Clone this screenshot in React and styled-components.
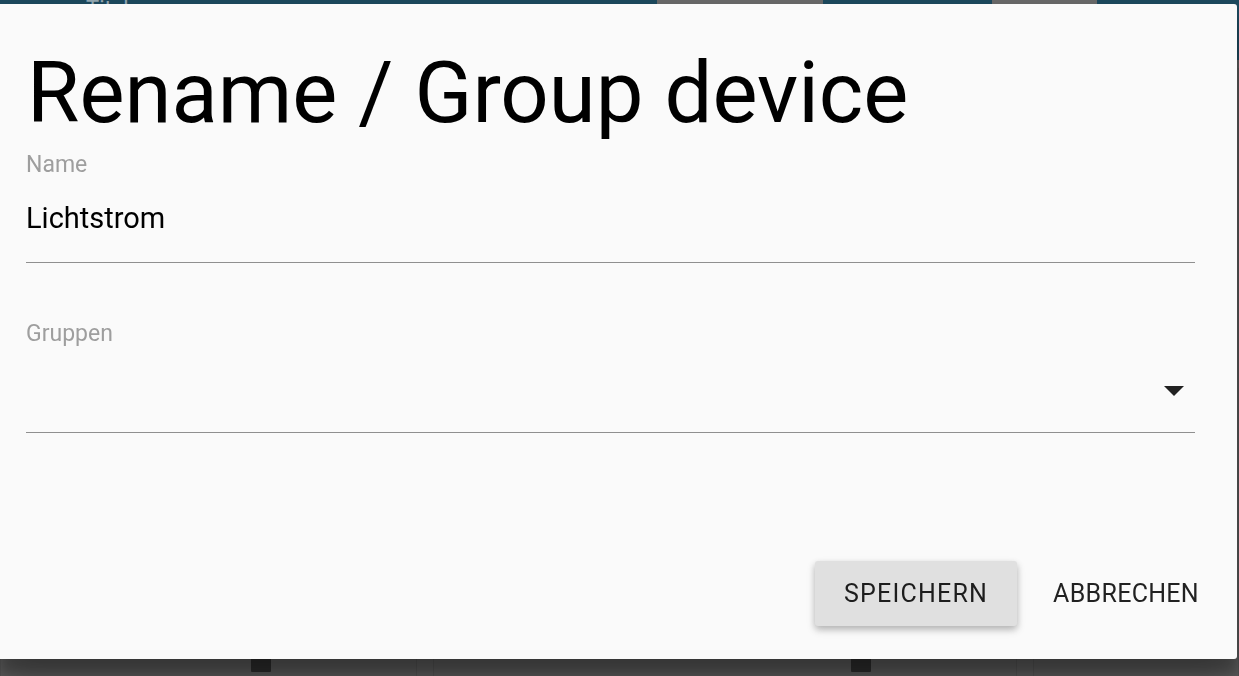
import styled, { createGlobalStyle } from "styled-components";

const Global = createGlobalStyle`
  html, body {
    margin: 0;
    padding: 0;
    height: 100%;
    overflow: hidden;
    font-family: Roboto, "Liberation Sans", sans-serif;
  }
`;

const Page = styled.div`
  width: 1239px;
  height: 676px;
  background: #5e5e5e;
  display: flex;
  flex-direction: column;
`;

const AppBar = styled.div`
  height: 60px;
  background: #1d4a5f;
  display: flex;
  align-items: flex-start;
  padding-left: 86px;
  position: relative;
`;

const BarTitle = styled.span`
  color: rgba(255, 255, 255, 0.55);
  font-size: 22px;
  line-height: 22px;
  margin-top: -2px;
`;

const Tab = styled.div`
  position: absolute;
  top: 0;
  left: ${(p) => p.left}px;
  width: ${(p) => p.width}px;
  height: 60px;
  background: #6b6b6b;
`;

const Cards = styled.div`
  flex: 1;
  display: grid;
  grid-template-columns: 417px 584px 1fr;
  column-gap: 16px;
  padding-top: 8px;
`;

const Card = styled.div`
  background: #5d5d5d;
  border-left: 1px solid #555;
  border-right: 1px solid #555;
  position: relative;
`;

const CardIcon = styled.div`
  position: absolute;
  left: ${(p) => p.left}px;
  bottom: 4px;
  width: 20px;
  height: 17px;
  background: #2e2e2e;
  border-radius: 1px;
`;

const Dialog = styled.div`
  position: fixed;
  top: 4px;
  left: 0;
  width: 1237px;
  height: 655px;
  box-sizing: border-box;
  background: #fafafa;
  border-radius: 0 3px 3px 0;
  box-shadow: 0 19px 38px rgba(0, 0, 0, 0.3), 0 15px 12px rgba(0, 0, 0, 0.22);
  padding: 47px 42px 0 26px;
  display: flex;
  flex-direction: column;
`;

const Title = styled.h1`
  margin: 0;
  font-weight: 400;
  font-size: 85px;
  line-height: 85px;
  color: #000;
  padding-left: 1px;
`;

const Field = styled.div`
  display: flex;
  flex-direction: column;
  margin-top: ${(p) => p.gap}px;
`;

const Label = styled.label`
  font-size: 23px;
  line-height: 23px;
  color: #9e9e9e;
`;

const InputRow = styled.div`
  height: ${(p) => p.height}px;
  border-bottom: 1px solid #8f8f8f;
  display: flex;
  align-items: flex-start;
  box-sizing: border-box;
`;

const Value = styled.span`
  font-size: 29px;
  line-height: 29px;
  color: #000;
  margin-top: 28px;
`;

const Arrow = styled.svg`
  width: 48px;
  height: 48px;
  margin-left: auto;
  margin-right: -3px;
  margin-top: 21px;
`;

const Actions = styled.div`
  margin-top: auto;
  margin-bottom: 33px;
  margin-right: -33px;
  display: flex;
  justify-content: flex-end;
  align-items: center;
  gap: 7px;
`;

const Button = styled.button`
  height: 65px;
  padding: 0 29px;
  border: none;
  border-radius: 3px;
  font-family: Roboto, "Liberation Sans", sans-serif;
  font-size: 25px;
  font-weight: 400;
  letter-spacing: ${(p) => p.spacing}px;
  color: rgba(0, 0, 0, 0.87);
  background: ${(p) => (p.raised ? "#e0e0e0" : "transparent")};
  box-shadow: ${(p) =>
    p.raised
      ? "0 3px 6px rgba(0,0,0,0.18), 0 4px 10px rgba(0,0,0,0.14)"
      : "none"};
`;

export default function App() {
  return (
    <>
      <Global />
      <Page>
        <AppBar>
          <BarTitle>Titel</BarTitle>
          <Tab left={657} width={166} />
          <Tab left={992} width={105} />
        </AppBar>
        <Cards>
          <Card>
            <CardIcon left={250} />
          </Card>
          <Card>
            <CardIcon left={417} />
          </Card>
          <Card />
        </Cards>
      </Page>
      <Dialog>
        <Title>Rename / Group device</Title>
        <Field gap={17}>
          <Label>Name</Label>
          <InputRow height={87}>
            <Value>Lichtstrom</Value>
          </InputRow>
        </Field>
        <Field gap={59}>
          <Label>Gruppen</Label>
          <InputRow height={88}>
            <Arrow viewBox="0 0 24 24">
              <path d="M7 10l5 5 5-5z" fill="#212121" />
            </Arrow>
          </InputRow>
        </Field>
        <Actions>
          <Button raised spacing={1.2}>
            SPEICHERN
          </Button>
          <Button spacing={0.3}>ABBRECHEN</Button>
        </Actions>
      </Dialog>
    </>
  );
}
